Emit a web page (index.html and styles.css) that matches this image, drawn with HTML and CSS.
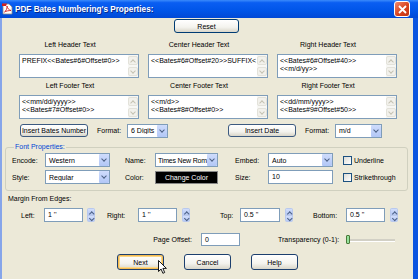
FILE: index.html
```html
<!DOCTYPE html>
<html lang="en">
<head>
    <meta charset="UTF-8" />
    <title>PDF Bates Numbering's Properties</title>
    <link rel="stylesheet" href="styles.css">
</head>
<body>
    <div class="window">
        <div class="titlebar">
            <svg class="app-icon" width="11" height="12" viewBox="0 0 11 12">
                <path d="M1 1h6l3 3v7H1z" fill="#fff" stroke="#8a8a8a" stroke-width="0.8"/>
                <path d="M0 0.5h5l-1 2.5h-4z" fill="#d21f1f"/>
                <path d="M2.5 9c1.5-1 3-4 2.5-6 0 2 2 4 4 4.5-2 0-5 0.5-6.5 1.5z" fill="none" stroke="#d21f1f" stroke-width="0.9"/>
            </svg>
            <span class="title">PDF Bates Numbering's Properties:</span>
            <span class="close">
                <svg width="9" height="9" viewBox="0 0 9 9"><path d="M1 1l7 7M8 1l-7 7" stroke="#fff" stroke-width="1.8"/></svg>
            </span>
        </div>

        <div class="body">
            <div class="reset-row">
                <button class="btn reset">Reset</button>
            </div>

            <div class="text-grid">
                <div class="field">
                    <div class="field-label">Left Header Text</div>
                    <div class="textbox">
                        <div class="textbox-text">PREFIX&lt;&lt;Bates#6#Offset#0&gt;&gt;</div>
                        <div class="vscroll"><span class="arrow up"></span><span class="arrow down"></span></div>
                    </div>
                </div>
                <div class="field">
                    <div class="field-label">Center Header Text</div>
                    <div class="textbox">
                        <div class="textbox-text">&lt;&lt;Bates#6#Offset#20&gt;&gt;SUFFIX&lt;</div>
                        <div class="vscroll"><span class="arrow up"></span><span class="arrow down"></span></div>
                    </div>
                </div>
                <div class="field">
                    <div class="field-label">Right Header Text</div>
                    <div class="textbox">
                        <div class="textbox-text">&lt;&lt;Bates#6#Offset#40&gt;&gt;<br>&lt;&lt;m/d/yy&gt;&gt;</div>
                        <div class="vscroll"><span class="arrow up"></span><span class="arrow down"></span></div>
                    </div>
                </div>
                <div class="field">
                    <div class="field-label">Left Footer Text</div>
                    <div class="textbox">
                        <div class="textbox-text">&lt;&lt;mm/dd/yyyy&gt;&gt;<br>&lt;&lt;Bates#7#Offset#0&gt;&gt;</div>
                        <div class="vscroll"><span class="arrow up"></span><span class="arrow down"></span></div>
                    </div>
                </div>
                <div class="field">
                    <div class="field-label">Center Footer Text</div>
                    <div class="textbox">
                        <div class="textbox-text">&lt;&lt;m/d&gt;&gt;<br>&lt;&lt;Bates#8#Offset#0&gt;&gt;</div>
                        <div class="vscroll"><span class="arrow up"></span><span class="arrow down"></span></div>
                    </div>
                </div>
                <div class="field">
                    <div class="field-label">Right Footer Text</div>
                    <div class="textbox">
                        <div class="textbox-text">&lt;&lt;dd/mm/yyyy&gt;&gt;<br>&lt;&lt;Bates#9#Offset#50&gt;&gt;</div>
                        <div class="vscroll"><span class="arrow up"></span><span class="arrow down"></span></div>
                    </div>
                </div>
            </div>

            <div class="insert-row">
                <div class="insert-group">
                    <button class="btn insert">Insert Bates Number</button>
                    <span class="lbl format-lbl">Format:</span>
                    <div class="select digits"><span class="select-text">6 Digits</span><span class="drop"></span></div>
                </div>
                <div class="insert-group">
                    <button class="btn insert">Insert Date</button>
                    <span class="lbl format-lbl">Format:</span>
                    <div class="select date"><span class="select-text">m/d</span><span class="drop"></span></div>
                </div>
            </div>

            <fieldset class="font-props">
                <legend>Font Properties:</legend>
                <div class="font-grid">
                    <span class="lbl">Encode:</span>
                    <div class="select w65"><span class="select-text">Western</span><span class="drop"></span></div>
                    <span class="lbl">Name:</span>
                    <div class="select w63"><span class="select-text tight">Times New Rom</span><span class="drop"></span></div>
                    <span class="lbl">Embed:</span>
                    <div class="select w65"><span class="select-text">Auto</span><span class="drop"></span></div>
                    <label class="check"><span class="box"></span>Underline</label>

                    <span class="lbl">Style:</span>
                    <div class="select w65"><span class="select-text">Regular</span><span class="drop"></span></div>
                    <span class="lbl">Color:</span>
                    <button class="color-btn">Change Color</button>
                    <span class="lbl">Size:</span>
                    <div class="input w65">10</div>
                    <label class="check"><span class="box"></span>Strikethrough</label>
                </div>
            </fieldset>

            <div class="section-lbl">Margin From Edges:</div>
            <div class="margin-row">
                <span class="lbl">Left:</span>
                <div class="input w39">1 ''</div>
                <span class="spin"><span class="arrow up"></span><span class="arrow down"></span></span>
                <span class="lbl">Right:</span>
                <div class="input w39">1 ''</div>
                <span class="spin"><span class="arrow up"></span><span class="arrow down"></span></span>
                <span class="lbl">Top:</span>
                <div class="input w40">0.5 ''</div>
                <span class="spin"><span class="arrow up"></span><span class="arrow down"></span></span>
                <span class="lbl">Bottom:</span>
                <div class="input w39">0.5 ''</div>
                <span class="spin"><span class="arrow up"></span><span class="arrow down"></span></span>
            </div>

            <div class="offset-row">
                <span class="lbl offset-lbl">Page Offset:</span>
                <div class="input w39">0</div>
                <span class="lbl">Transparency (0-1):</span>
                <div class="slider"><span class="thumb"></span></div>
            </div>

            <div class="button-row">
                <button class="btn action default">Next</button>
                <button class="btn action">Cancel</button>
                <button class="btn action">Help</button>
                <svg class="cursor" width="9" height="14" viewBox="0 0 9 14">
                    <path d="M0.5 0.5v11l2.6-2.4 1.8 4.2 1.8-0.8-1.8-4.1h3.5z" fill="#fff" stroke="#000" stroke-width="0.9"/>
                </svg>
            </div>
        </div>
    </div>
</body>
</html>
```

FILE: styles.css
```css
* {
    margin: 0;
    padding: 0;
    box-sizing: border-box;
}

body {
    width: 418px;
    height: 279px;
    overflow: hidden;
    font-family: 'Liberation Sans', Arial, sans-serif;
    font-size: 7px;
    color: #000;
    background: #ece9d8;
}

.window {
    width: 418px;
    height: 279px;
    background-color: #ece9d8;
    box-shadow: inset 2px 0 #86a5ea, inset -5px 0 #0a54e0;
}

/* title bar */
.titlebar {
    height: 18px;
    display: flex;
    align-items: center;
    padding-left: 2px;
    background: linear-gradient(#3b8bfb 0%, #0a5ef2 15%, #0055e8 60%, #0149d6 100%);
}

.app-icon {
    margin-right: 2px;
}

.title {
    color: #fff;
    font-weight: bold;
    font-size: 8.2px;
    text-shadow: 1px 1px #0a2a8a;
}

.close {
    margin-left: auto;
    margin-right: 8px;
    width: 16px;
    height: 16px;
    border: 1px solid #fff;
    border-radius: 3px;
    background: linear-gradient(135deg, #f08b6e, #d9431e 55%, #c03414);
    display: flex;
    align-items: center;
    justify-content: center;
}

.body {
    padding: 1px 5px 0 2px;
}

/* buttons */
.btn {
    font-family: inherit;
    font-size: 7px;
    color: #000;
    padding: 0;
    border: 1px solid #003c74;
    border-radius: 3px;
    background: linear-gradient(#ffffff, #f4f3ee 60%, #d9d6c9);
    height: 14px;
}

.reset-row {
    display: flex;
    justify-content: center;
    padding-right: 2px;
}

.reset {
    width: 65px;
}

/* header / footer text boxes */
.text-grid {
    display: grid;
    grid-template-columns: repeat(3, 120px);
    column-gap: 9px;
    row-gap: 3px;
    margin: 7px 0 0 17px;
}

.field-label {
    height: 10px;
    line-height: 10px;
    text-align: center;
    padding-right: 18px;
    margin-bottom: 4px;
}

.textbox {
    height: 24px;
    border: 1px solid #7f9db9;
    background: #fff;
    display: flex;
}

.textbox-text {
    flex: 1;
    padding: 2px 0 0 2px;
    line-height: 8px;
    white-space: nowrap;
    overflow: hidden;
}

.vscroll {
    width: 10px;
    background: #f7f7f4;
    display: flex;
    flex-direction: column;
    justify-content: space-between;
    padding: 1px 0;
}

.vscroll .arrow {
    height: 9px;
    border: 1px solid #e3e2da;
    border-radius: 2px;
    background: #f2f1ec;
    position: relative;
}

.arrow::after {
    content: '';
    position: absolute;
    left: 2px;
    width: 3px;
    height: 3px;
    border-left: 1px solid #c5c2b2;
    border-top: 1px solid #c5c2b2;
}

.arrow.up::after {
    top: 3px;
    transform: rotate(45deg);
}

.arrow.down::after {
    top: 1px;
    transform: rotate(225deg);
}

/* insert row */
.insert-row {
    display: flex;
    margin: 4px 0 0 18px;
    height: 15px;
    align-items: center;
}

.insert-group {
    display: flex;
    align-items: center;
}

.insert-group + .insert-group {
    margin-left: 60px;
}

.insert {
    width: 68px;
    height: 13px;
    border-width: 1.5px;
    border-color: #3c5a80;
}

.format-lbl {
    margin: 0 6px 0 9px;
    width: 24px;
}

.lbl {
    white-space: nowrap;
}

/* selects and inputs */
.select {
    height: 14px;
    border: 1px solid #7f9db9;
    background: #fff;
    display: flex;
    align-items: center;
}

.select-text {
    flex: 1;
    padding-left: 3px;
    white-space: nowrap;
    overflow: hidden;
}

.select-text.tight {
    padding-left: 2px;
    letter-spacing: -0.2px;
}

.drop {
    width: 10px;
    height: 12px;
    background: linear-gradient(#cfdcfc, #b2c7f6);
    border-radius: 1px;
    position: relative;
}

.drop::after {
    content: '';
    position: absolute;
    left: 3px;
    top: 3px;
    width: 3px;
    height: 3px;
    border-right: 1.3px solid #4d6185;
    border-bottom: 1.3px solid #4d6185;
    transform: rotate(45deg);
}

.digits {
    width: 41px;
}

.date {
    width: 47px;
}

.w65 { width: 65px; }
.w63 { width: 63px; }
.w39 { width: 39px; }
.w40 { width: 40px; }

.input {
    height: 14px;
    border: 1px solid #7f9db9;
    background: #fff;
    padding-left: 3px;
    line-height: 12px;
}

/* font properties */
.font-props {
    margin: 4px 0 0 3px;
    width: 403px;
    height: 49px;
    border: 1px solid #d0d0bf;
    border-radius: 3px;
    padding: 0 0 0 6px;
}

.font-props legend {
    color: #0046d5;
    padding: 0 1px;
    margin-left: 2px;
    line-height: 10px;
}

.font-grid {
    display: grid;
    grid-template-columns: 33px 80px 30px 80px 33px 75px 1fr;
    grid-template-rows: 14px 14px;
    row-gap: 3px;
    align-items: center;
    margin-top: 1px;
}

.color-btn {
    width: 63px;
    height: 13px;
    background: #000;
    color: #fff;
    border: 1px solid #888;
    font-family: inherit;
    font-size: 7px;
}

.check {
    display: flex;
    align-items: center;
}

.check .box {
    width: 9px;
    height: 9px;
    border: 1px solid #1c5180;
    background: linear-gradient(135deg, #dcdcd7, #fff);
    margin-right: 2px;
}

/* margins */
.section-lbl {
    margin: 3px 0 0 6px;
    height: 10px;
    line-height: 10px;
}

.margin-row {
    display: grid;
    grid-template-columns: 23px 43px 20px 31px 44px 38px 20px 45px 28px 33px 44px 8px;
    align-items: center;
    margin: 4px 0 0 19px;
    height: 14px;
}

.spin {
    width: 8px;
    height: 14px;
    display: flex;
    flex-direction: column;
    border-radius: 2px;
    overflow: hidden;
}

.spin .arrow {
    flex: 1;
    background: linear-gradient(#d2defb, #b6c9f6);
    border: 1px solid #b9c9ee;
    position: relative;
}

.spin .arrow::after {
    left: 1.5px;
    border-color: #4d6185;
    width: 2.5px;
    height: 2.5px;
}

.spin .arrow.up::after { top: 2.5px; }
.spin .arrow.down::after { top: 0.5px; }

/* page offset / transparency */
.offset-row {
    display: grid;
    grid-template-columns: 199px 77px 68px 50px;
    align-items: center;
    margin-top: 11px;
    height: 13px;
}

.offset-lbl {
    text-align: right;
    padding-right: 9px;
}

.offset-row .input {
    height: 13px;
}

.slider {
    height: 9px;
    width: 49px;
    position: relative;
}

.slider::before {
    content: '';
    position: absolute;
    left: 2px;
    right: 0;
    top: 4px;
    height: 2px;
    background: #d2d0c5;
    border-bottom: 1px solid #fff;
}

.thumb {
    position: absolute;
    left: 0;
    top: 0;
    width: 4px;
    height: 9px;
    border: 1px solid #4a7a3a;
    border-radius: 1px;
    background: linear-gradient(90deg, #2ec43a, #fff 50%, #2ec43a);
}

/* bottom buttons */
.button-row {
    display: flex;
    justify-content: center;
    gap: 20px;
    margin-top: 8px;
    position: relative;
}

.action {
    width: 47px;
    height: 16px;
    border-color: #1c3f6e;
}

.default {
    box-shadow: inset 0 0 0 1px #f5bb52, inset 0 0 0 2px #fbd889;
}

.cursor {
    position: absolute;
    left: 156px;
    top: 6px;
}
```
